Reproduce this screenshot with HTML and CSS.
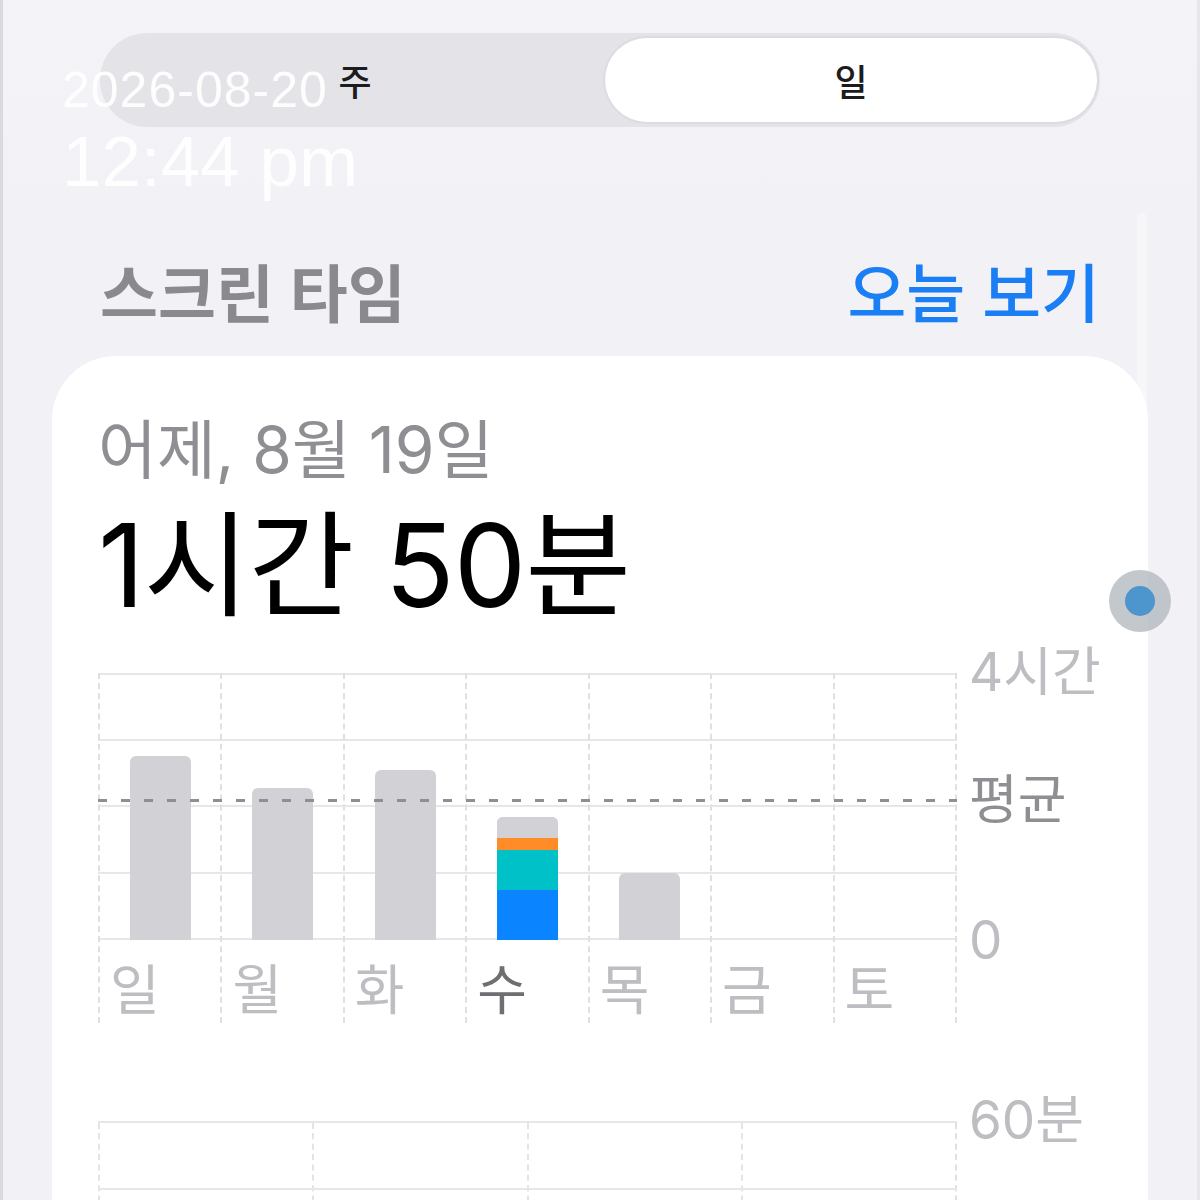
FILE: index.html
```html
<!DOCTYPE html>
<html>
    <head>
        <title>스크린 타임</title>
        <link rel="stylesheet" href="styles.css">
    </head>
    <body>
        <div class="screen">
            <div class="segmented">
                <div class="seg">주</div>
                <div class="seg active">일</div>
            </div>

            <div class="stamp">
                <div class="stamp-date">2026-08-20</div>
                <div class="stamp-time">12:44 pm</div>
            </div>

            <div class="scroll-track"></div>

            <div class="section-head">
                <span class="section-title">스크린 타임</span>
                <span class="section-link">오늘 보기</span>
            </div>

            <div class="card">
                <div class="card-date">어제, 8월 19일</div>
                <div class="card-total">1시간 50분</div>

                <div class="chart">
                    <div class="plot">
                        <div class="rows">
                            <div></div><div></div><div></div><div></div>
                        </div>
                        <div class="cols">
                            <div class="col">
                                <div class="bar-slot"><div class="bar" style="height:184px"></div></div>
                                <div class="day">일</div>
                            </div>
                            <div class="col">
                                <div class="bar-slot"><div class="bar" style="height:152px"></div></div>
                                <div class="day">월</div>
                            </div>
                            <div class="col">
                                <div class="bar-slot"><div class="bar" style="height:170px"></div></div>
                                <div class="day">화</div>
                            </div>
                            <div class="col">
                                <div class="bar-slot">
                                    <div class="bar stack">
                                        <div class="seg-grey" style="height:21px"></div>
                                        <div class="seg-orange" style="height:12px"></div>
                                        <div class="seg-teal" style="height:40px"></div>
                                        <div class="seg-blue" style="height:50px"></div>
                                    </div>
                                </div>
                                <div class="day today">수</div>
                            </div>
                            <div class="col">
                                <div class="bar-slot"><div class="bar" style="height:67px"></div></div>
                                <div class="day">목</div>
                            </div>
                            <div class="col">
                                <div class="bar-slot"></div>
                                <div class="day">금</div>
                            </div>
                            <div class="col">
                                <div class="bar-slot"></div>
                                <div class="day">토</div>
                            </div>
                        </div>
                        <div class="avg-line"></div>
                    </div>
                    <div class="axis">
                        <span class="tick" style="top:-26px">4시간</span>
                        <span class="tick avg" style="top:102px">평균</span>
                        <span class="tick" style="top:242px">0</span>
                    </div>
                </div>

                <div class="chart second">
                    <div class="plot">
                        <div class="cols small">
                            <div class="col"></div>
                            <div class="col"></div>
                            <div class="col"></div>
                            <div class="col"></div>
                        </div>
                    </div>
                    <div class="axis">
                        <span class="tick" style="top:-26px">60분</span>
                    </div>
                </div>
            </div>

            <div class="dot"><div class="dot-inner"></div></div>
        </div>
    </body>
</html>
```

FILE: styles.css
```css
body{
    margin: 0;
    background-color: #f2f2f7;
    font-family: Inter, "Noto Sans CJK KR", sans-serif;
}

.screen{
    position: relative;
    height: 1200px;
    overflow: hidden;
    border-left: 3px solid #dadade;
    border-right: 3px solid #e6e6eb;
    box-sizing: border-box;
    background: linear-gradient(#f4f4f8, #f1f1f6 200px);
}

/* segmented control */
.segmented{
    display: flex;
    margin: 33px 97px 0 97px;
    height: 94px;
    padding: 5px 3px 5px 5px;
    box-sizing: border-box;
    border-radius: 47px;
    background-color: #e3e3e8;
}

.seg{
    flex: 1;
    display: flex;
    align-items: center;
    justify-content: center;
    font-size: 36px;
    font-weight: 500;
    color: #1c1c1e;
    border-radius: 42px;
}

.seg.active{
    flex: 0 0 492px;
    background-color: #fff;
    box-shadow: 0 0 0 2px #dcdce1;
}

/* timestamp that sits over the screen */
.stamp{
    position: absolute;
    left: 59px;
    top: 65px;
    font-family: "Liberation Sans", Arial, sans-serif;
    color: rgba(255, 255, 255, 0.9);
    line-height: 1;
}

.stamp-date{
    font-size: 50px;
    letter-spacing: 1px;
}

.stamp-time{
    font-size: 71px;
    margin-top: 11px;
}

.scroll-track{
    position: absolute;
    left: 1134px;
    top: 213px;
    width: 10px;
    height: 300px;
    border-radius: 5px;
    background-color: #f7f7fa;
}

.section-head{
    display: flex;
    justify-content: space-between;
    align-items: center;
    margin: 122px 97px 0 97px;
    height: 80px;
}

.section-title{
    font-size: 63px;
    font-weight: 600;
    color: #8a8a8e;
}

.section-link{
    font-size: 64px;
    font-weight: 500;
    color: #1a7ef5;
}

/* card */
.card{
    position: relative;
    margin: 27px 49px 0 49px;
    padding: 56px 0 0 46px;
    height: 900px;
    background-color: #fff;
    border-radius: 64px 64px 0 0;
}

.card-date{
    font-size: 64px;
    color: #8e8e93;
    line-height: 1.2;
}

.card-total{
    font-size: 115px;
    color: #000;
    line-height: 1.2;
    margin-top: 8px;
    letter-spacing: -1px;
}

.chart{
    display: flex;
    gap: 12px;
    margin-top: 38px;
}

.chart.second{
    margin-top: 98px;
}

.plot{
    position: relative;
    width: 859px;
}

.rows{
    position: absolute;
    top: 0;
    left: 0;
    right: 0;
    height: 267px;
    display: flex;
    flex-direction: column;
}

.rows div{
    flex: 1;
    border-top: 2px solid #e6e6eb;
}

.rows div:last-child{
    border-bottom: 2px solid #e6e6eb;
}

.cols{
    position: relative;
    display: flex;
}

.col{
    flex: 1;
    border-left: 2px dashed #e0e0e4;
}

.col:last-child{
    border-right: 2px dashed #e0e0e4;
}

.bar-slot{
    height: 267px;
    display: flex;
    align-items: flex-end;
    justify-content: center;
}

.bar{
    width: 61px;
    border-radius: 6px 6px 0 0;
    background-color: #d1d1d6;
}

.bar.stack{
    display: flex;
    flex-direction: column;
    overflow: hidden;
}

.seg-grey{ background-color: #d1d1d6; }
.seg-orange{ background-color: #ff8c26; }
.seg-teal{ background-color: #00c0c8; }
.seg-blue{ background-color: #0a84ff; }

.day{
    height: 83px;
    box-sizing: border-box;
    padding: 11px 0 0 10px;
    font-size: 54px;
    color: #bdbdc2;
    line-height: 80px;
}

.day.today{
    color: #6e6e73;
}

.avg-line{
    position: absolute;
    left: 0;
    right: 0;
    top: 126px;
    height: 3px;
    background-image: repeating-linear-gradient(90deg, #8e8e93 0 9px, transparent 9px 23px);
}

.axis{
    position: relative;
    width: 140px;
}

.tick{
    position: absolute;
    left: 0;
    font-size: 53px;
    line-height: 50px;
    color: #bdbdc2;
    white-space: nowrap;
}

.tick.avg{
    color: #8e8e93;
}

.cols.small{
    height: 120px;
    border-top: 2px solid #e6e6eb;
}

.cols.small .col{
    border-left-color: #e4e4e8;
}

.cols.small::after{
    content: "";
    position: absolute;
    left: 0;
    right: 0;
    top: 65px;
    border-top: 2px solid #e6e6eb;
}

/* floating touch indicator */
.dot{
    position: absolute;
    left: 1106px;
    top: 570px;
    width: 62px;
    height: 62px;
    border-radius: 50%;
    background-color: rgba(175, 181, 188, 0.75);
    display: flex;
    align-items: center;
    justify-content: center;
}

.dot-inner{
    width: 30px;
    height: 30px;
    border-radius: 50%;
    background-color: #4d96cd;
}
```
